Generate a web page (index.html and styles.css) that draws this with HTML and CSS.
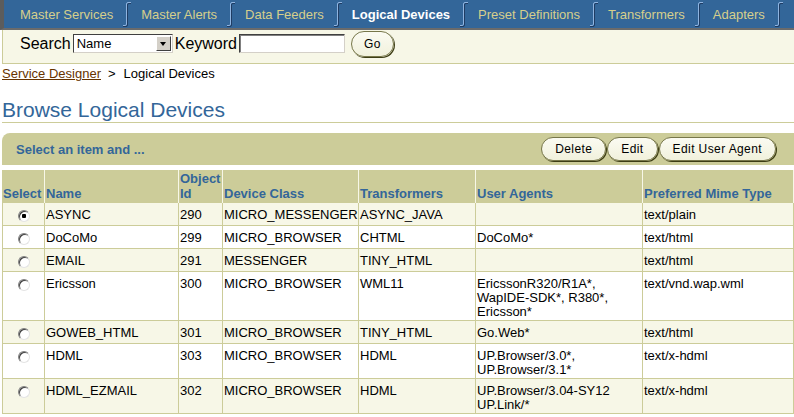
FILE: index.html
```html
<!DOCTYPE html>
<html lang="en">

<head>
    <meta charset="UTF-8">
    <title>Browse Logical Devices</title>
    <link rel="stylesheet" href="styles.css">
</head>

<body>

    <!-- Global Tabs -->
    <div class="tabbar">
        <a class="tab" href="#">Master Services</a>
        <svg class="sep" viewBox="0 0 8 26"><path class="shade" d="M0 25.5 H3 Q4.5 25.5 4.5 24 V4 Q4.5 2.5 6 2.5 H8"/><path class="edge" d="M0 24.5 H2 Q3.5 24.5 3.5 23 V3 Q3.5 1.5 5 1.5 H8"/></svg>
        <a class="tab" href="#">Master Alerts</a>
        <svg class="sep" viewBox="0 0 8 26"><path class="shade" d="M0 25.5 H3 Q4.5 25.5 4.5 24 V4 Q4.5 2.5 6 2.5 H8"/><path class="edge" d="M0 24.5 H2 Q3.5 24.5 3.5 23 V3 Q3.5 1.5 5 1.5 H8"/></svg>
        <a class="tab" href="#">Data Feeders</a>
        <svg class="sep" viewBox="0 0 8 26"><path class="shade" d="M0 25.5 H3 Q4.5 25.5 4.5 24 V4 Q4.5 2.5 6 2.5 H8"/><path class="edge" d="M0 24.5 H2 Q3.5 24.5 3.5 23 V3 Q3.5 1.5 5 1.5 H8"/></svg>
        <a class="tab active" href="#">Logical Devices</a>
        <svg class="sep" viewBox="0 0 8 26"><path class="shade" d="M0 25.5 H3 Q4.5 25.5 4.5 24 V4 Q4.5 2.5 6 2.5 H8"/><path class="edge" d="M0 24.5 H2 Q3.5 24.5 3.5 23 V3 Q3.5 1.5 5 1.5 H8"/></svg>
        <a class="tab" href="#">Preset Definitions</a>
        <svg class="sep" viewBox="0 0 8 26"><path class="shade" d="M0 25.5 H3 Q4.5 25.5 4.5 24 V4 Q4.5 2.5 6 2.5 H8"/><path class="edge" d="M0 24.5 H2 Q3.5 24.5 3.5 23 V3 Q3.5 1.5 5 1.5 H8"/></svg>
        <a class="tab" href="#">Transformers</a>
        <svg class="sep" viewBox="0 0 8 26"><path class="shade" d="M0 25.5 H3 Q4.5 25.5 4.5 24 V4 Q4.5 2.5 6 2.5 H8"/><path class="edge" d="M0 24.5 H2 Q3.5 24.5 3.5 23 V3 Q3.5 1.5 5 1.5 H8"/></svg>
        <a class="tab" href="#">Adapters</a>
        <svg class="sep" viewBox="0 0 8 26"><path class="shade" d="M0 25.5 H3 Q4.5 25.5 4.5 24 V4 Q4.5 2.5 6 2.5 H8"/><path class="edge" d="M0 24.5 H2 Q3.5 24.5 3.5 23 V3 Q3.5 1.5 5 1.5 H8"/></svg>
    </div>

    <div class="content">

        <!-- Search Bar -->
        <form class="search">
            <span>Search</span>
            <div class="select"><span>Name</span><span class="arrow"></span></div>
            <span>Keyword</span>
            <input type="text" class="keyword">
            <button type="button" class="btn go">Go</button>
        </form>

        <!-- Breadcrumbs -->
        <div class="crumbs">
            <a href="#">Service Designer</a><span class="gt">&gt;</span>Logical Devices
        </div>

        <h1>Browse Logical Devices</h1>

        <!-- Table Actions -->
        <div class="actions">
            <span class="title">Select an item and ...</span>
            <div class="buttons">
                <button type="button" class="btn">Delete</button>
                <button type="button" class="btn">Edit</button>
                <button type="button" class="btn">Edit User Agent</button>
            </div>
        </div>

        <!-- Devices Table -->
        <table class="devices">
            <colgroup>
                <col style="width:43px">
                <col style="width:134px">
                <col style="width:44px">
                <col style="width:136px">
                <col style="width:117px">
                <col style="width:167px">
                <col>
            </colgroup>
            <thead>
                <tr>
                    <th>Select</th>
                    <th>Name</th>
                    <th>Object<br>Id</th>
                    <th>Device Class</th>
                    <th>Transformers</th>
                    <th>User Agents</th>
                    <th>Preferred Mime Type</th>
                </tr>
            </thead>
            <tbody>
                <tr>
                    <td><input type="radio" name="device" checked></td>
                    <td>ASYNC</td>
                    <td>290</td>
                    <td>MICRO_MESSENGER</td>
                    <td>ASYNC_JAVA</td>
                    <td></td>
                    <td>text/plain</td>
                </tr>
                <tr>
                    <td><input type="radio" name="device"></td>
                    <td>DoCoMo</td>
                    <td>299</td>
                    <td>MICRO_BROWSER</td>
                    <td>CHTML</td>
                    <td>DoCoMo*</td>
                    <td>text/html</td>
                </tr>
                <tr>
                    <td><input type="radio" name="device"></td>
                    <td>EMAIL</td>
                    <td>291</td>
                    <td>MESSENGER</td>
                    <td>TINY_HTML</td>
                    <td></td>
                    <td>text/html</td>
                </tr>
                <tr>
                    <td><input type="radio" name="device"></td>
                    <td>Ericsson</td>
                    <td>300</td>
                    <td>MICRO_BROWSER</td>
                    <td>WML11</td>
                    <td>EricssonR320/R1A*,<br>WapIDE-SDK*, R380*,<br>Ericsson*</td>
                    <td>text/vnd.wap.wml</td>
                </tr>
                <tr>
                    <td><input type="radio" name="device"></td>
                    <td>GOWEB_HTML</td>
                    <td>301</td>
                    <td>MICRO_BROWSER</td>
                    <td>TINY_HTML</td>
                    <td>Go.Web*</td>
                    <td>text/html</td>
                </tr>
                <tr>
                    <td><input type="radio" name="device"></td>
                    <td>HDML</td>
                    <td>303</td>
                    <td>MICRO_BROWSER</td>
                    <td>HDML</td>
                    <td>UP.Browser/3.0*,<br>UP.Browser/3.1*</td>
                    <td>text/x-hdml</td>
                </tr>
                <tr>
                    <td><input type="radio" name="device"></td>
                    <td>HDML_EZMAIL</td>
                    <td>302</td>
                    <td>MICRO_BROWSER</td>
                    <td>HDML</td>
                    <td>UP.Browser/3.04-SY12<br>UP.Link/*</td>
                    <td>text/x-hdml</td>
                </tr>
            </tbody>
        </table>

    </div>

</body>

</html>
```

FILE: styles.css
```css
/* Basic Reset */
* {
    box-sizing: border-box;
}

body {
    margin: 0;
    font-family: 'Liberation Sans', Arial, sans-serif;
    font-size: 13px;
    color: #000;
    background: #fff;
    overflow: hidden;
}

/* Global Tabs */
.tabbar {
    display: flex;
    align-items: center;
    height: 30px;
    padding-left: 6px;
    background: #336699;
    border-left: 4px solid #5c5c5c;
    border-bottom: 2px solid #6b6b6b;
    white-space: nowrap;
}

.tab {
    flex-shrink: 0;
    padding: 0 10px;
    color: #d6cf8c;
    text-decoration: none;
    font-size: 13px;
}

.tab.active {
    color: #fff;
    font-weight: bold;
}

.sep {
    flex-shrink: 0;
    width: 8px;
    height: 26px;
    fill: none;
}

.sep .edge {
    stroke: #8fb4e0;
    stroke-width: 1;
}

.sep .shade {
    stroke: #1f3c63;
    stroke-width: 1;
}

/* Page Content */
.content {
    padding-left: 2px;
}

/* Search Bar */
.search {
    display: flex;
    align-items: center;
    gap: 2px;
    height: 34px;
    padding: 0 0 6px 17px;
    background: #f7f7e7;
    border-left: 1px solid #cccc99;
    border-bottom: 1px solid #cccc99;
    font-size: 16px;
}

.select {
    display: flex;
    align-items: center;
    justify-content: space-between;
    width: 100px;
    height: 19px;
    padding: 0 1px 0 3px;
    background: #fff;
    border: 1px solid;
    border-color: #404040 #d4d0c8 #d4d0c8 #404040;
    font-size: 13px;
}

.select .arrow {
    position: relative;
    width: 15px;
    height: 15px;
    background: #d4d0c8;
    border: 1px solid;
    border-color: #fff #404040 #404040 #fff;
}

.select .arrow::after {
    content: '';
    position: absolute;
    left: 3px;
    top: 5px;
    border-top: 4px solid #000;
    border-left: 3.5px solid transparent;
    border-right: 3.5px solid transparent;
}

.keyword {
    width: 106px;
    height: 19px;
    margin: 0;
    padding: 0 2px;
    border: 1px solid;
    border-color: #404040 #d4d0c8 #d4d0c8 #404040;
    box-shadow: inset 1px 1px 0 #808080;
    background: #fff;
    outline: none;
}

/* Pill Buttons */
.btn {
    height: 24px;
    padding: 0 13px;
    border: 1px solid #77774a;
    border-radius: 12px;
    box-shadow: 1px 1px 0 #3d3d14;
    background: linear-gradient(#fbfbf2, #f1f1dc);
    font-family: 'Liberation Sans', Arial, sans-serif;
    font-size: 12px;
    letter-spacing: 0.4px;
    color: #000;
    cursor: pointer;
}

.btn.go {
    height: 26px;
    margin-left: 4px;
    padding: 0 12px;
    border-radius: 13px;
}

/* Breadcrumbs */
.crumbs {
    margin-top: 2px;
    line-height: 15px;
}

.crumbs a {
    color: #663300;
}

.crumbs .gt {
    margin: 0 8px 0 7px;
}

/* Page Title */
h1 {
    margin: 17px 0 0;
    font-size: 21px;
    font-weight: normal;
    line-height: 24px;
    color: #336699;
    border-bottom: 1px solid #cccc99;
}

/* Table Actions */
.actions {
    display: flex;
    align-items: center;
    justify-content: space-between;
    height: 32px;
    margin-top: 10px;
    padding: 0 18px 0 14px;
    background: #cccc99;
    border-top-left-radius: 8px;
}

.actions .title {
    font-weight: bold;
    color: #336699;
}

.buttons {
    display: flex;
    gap: 1px;
}

/* Devices Table */
.devices {
    width: 100%;
    margin-top: 5px;
    border-collapse: separate;
    border-spacing: 0;
    table-layout: fixed;
    font-size: 13px;
}

.devices th {
    padding: 1px 0 2px 1px;
    background: #cccc99;
    color: #336699;
    font-weight: bold;
    text-align: left;
    vertical-align: bottom;
    line-height: 15px;
    white-space: nowrap;
    border-right: 1px solid #f7f7e7;
}

.devices td {
    padding: 5px 0 1px 1px;
    line-height: 14px;
    vertical-align: top;
    white-space: nowrap;
    border-right: 1px solid #cccc99;
    border-bottom: 1px solid #cccc99;
}

.devices td:first-child {
    border-left: 1px solid #cccc99;
    text-align: center;
}

.devices tbody tr:nth-child(odd) {
    background: #f7f7e7;
}

/* Radio Buttons */
.devices input[type="radio"] {
    appearance: none;
    display: block;
    width: 12px;
    height: 12px;
    margin: 2px auto 2px;
    border: 1px solid;
    border-color: #808080 #e4e4e4 #e4e4e4 #808080;
    border-radius: 50%;
    box-shadow: inset 1px 1px 0 #404040;
    background: #fff;
}

.devices input[type="radio"]:checked {
    background: radial-gradient(circle, #000 0 2px, #fff 2.5px);
}
```
